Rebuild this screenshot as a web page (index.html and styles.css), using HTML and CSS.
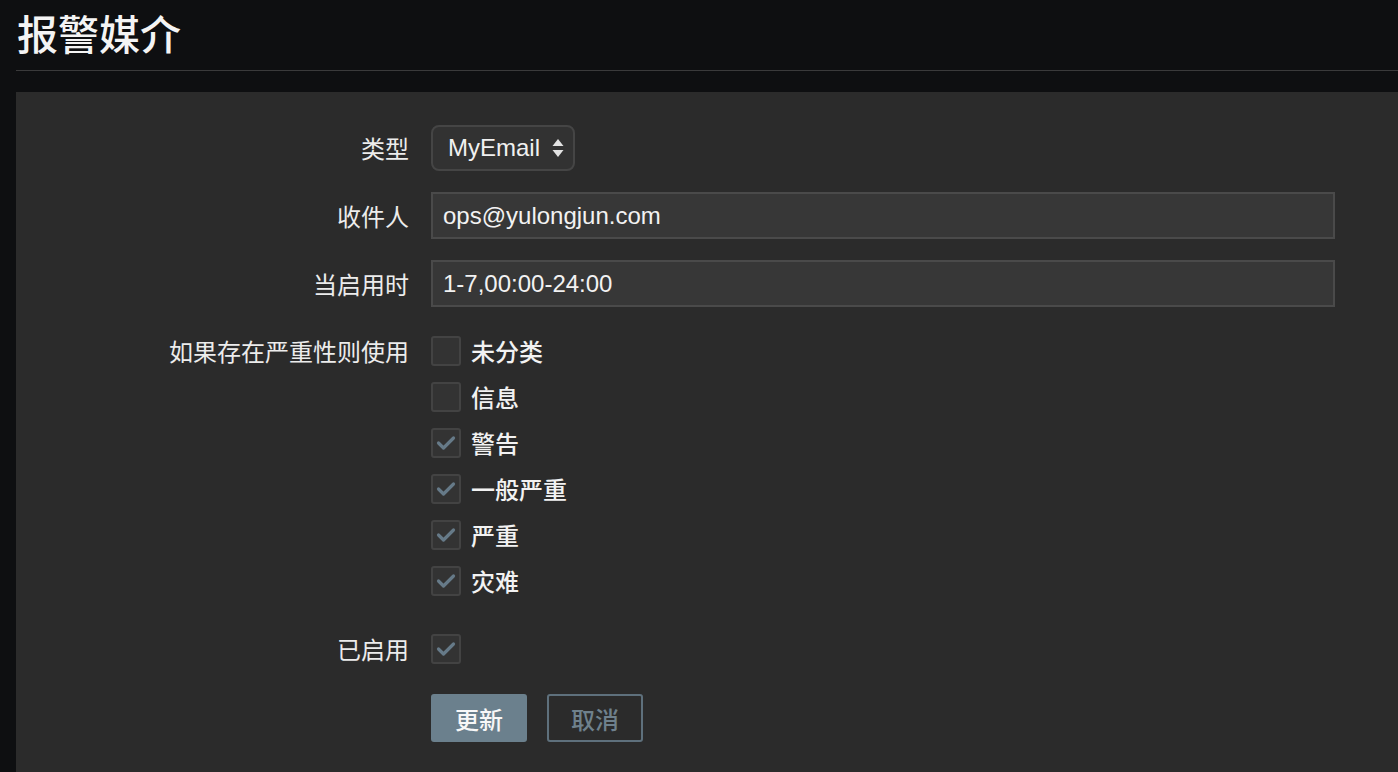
FILE: index.html
```html
<!DOCTYPE html>
<html lang="zh-CN">
<head>
<meta charset="utf-8">
<title>报警媒介</title>
<link rel="stylesheet" href="styles.css">
</head>
<body>
<div class="page">
  <header class="page-header">
    <h1 class="title">报警媒介</h1>
  </header>
  <section class="panel">
    <form class="form">
      <div class="row row-type">
        <label class="label">类型</label>
        <div class="control">
          <div class="select">
            <span class="select-text">MyEmail</span>
            <svg class="select-arrows" width="12" height="20" viewBox="0 0 12 20">
              <path d="M6 1 L11.5 8 L0.5 8 Z" fill="#e2e2e2"/>
              <path d="M6 19 L11.5 12 L0.5 12 Z" fill="#e2e2e2"/>
            </svg>
          </div>
        </div>
      </div>
      <div class="row row-input">
        <label class="label">收件人</label>
        <div class="control">
          <input class="text-input" type="text" value="ops@yulongjun.com">
        </div>
      </div>
      <div class="row row-input">
        <label class="label">当启用时</label>
        <div class="control">
          <input class="text-input" type="text" value="1-7,00:00-24:00">
        </div>
      </div>
      <div class="row row-severity">
        <label class="label">如果存在严重性则使用</label>
        <div class="control checklist">
          <div class="check-item"><span class="checkbox"></span><span class="check-label">未分类</span></div>
          <div class="check-item"><span class="checkbox"></span><span class="check-label">信息</span></div>
          <div class="check-item"><span class="checkbox checked"><svg width="30" height="30" viewBox="0 0 30 30"><path d="M7.5 15 L12.5 20 L22.5 10" fill="none" stroke="#667a88" stroke-width="3.2" stroke-linecap="round" stroke-linejoin="round"/></svg></span><span class="check-label">警告</span></div>
          <div class="check-item"><span class="checkbox checked"><svg width="30" height="30" viewBox="0 0 30 30"><path d="M7.5 15 L12.5 20 L22.5 10" fill="none" stroke="#667a88" stroke-width="3.2" stroke-linecap="round" stroke-linejoin="round"/></svg></span><span class="check-label">一般严重</span></div>
          <div class="check-item"><span class="checkbox checked"><svg width="30" height="30" viewBox="0 0 30 30"><path d="M7.5 15 L12.5 20 L22.5 10" fill="none" stroke="#667a88" stroke-width="3.2" stroke-linecap="round" stroke-linejoin="round"/></svg></span><span class="check-label">严重</span></div>
          <div class="check-item"><span class="checkbox checked"><svg width="30" height="30" viewBox="0 0 30 30"><path d="M7.5 15 L12.5 20 L22.5 10" fill="none" stroke="#667a88" stroke-width="3.2" stroke-linecap="round" stroke-linejoin="round"/></svg></span><span class="check-label">灾难</span></div>
        </div>
      </div>
      <div class="row row-enabled">
        <label class="label">已启用</label>
        <div class="control">
          <span class="checkbox checked"><svg width="30" height="30" viewBox="0 0 30 30"><path d="M7.5 15 L12.5 20 L22.5 10" fill="none" stroke="#667a88" stroke-width="3.2" stroke-linecap="round" stroke-linejoin="round"/></svg></span>
        </div>
      </div>
      <div class="row row-actions">
        <span class="label"></span>
        <div class="control actions">
          <button type="button" class="btn btn-primary">更新</button>
          <button type="button" class="btn btn-secondary">取消</button>
        </div>
      </div>
    </form>
  </section>
</div>
</body>
</html>
```

FILE: styles.css
```css
html, body {
  margin: 0;
  padding: 0;
  background: #0e0f11;
  overflow: hidden;
}

body {
  font-family: "Liberation Sans", "Noto Sans CJK SC", sans-serif;
  color: #ececec;
}

.page {
  padding-left: 16px;
}

.page-header {
  box-sizing: border-box;
  height: 71px;
  border-bottom: 1px solid #3a3a3b;
}

.title {
  margin: 0;
  padding-left: 1px;
  font-family: "Noto Sans CJK SC", sans-serif;
  font-size: 41px;
  font-weight: 500;
  line-height: 64px;
  color: #f4f4f4;
}

.panel {
  margin-top: 21px;
  background: #2b2b2b;
  padding: 33px 63px 40px 0;
  min-height: 700px;
  box-sizing: border-box;
}

.form {
  display: flex;
  flex-direction: column;
}

.row {
  display: grid;
  grid-template-columns: 393px 1fr;
  column-gap: 22px;
  align-items: center;
}

.row-input { margin-top: 21px; }
.row-severity { margin-top: 29px; align-items: start; }
.row-enabled { margin-top: 38px; }
.row-actions { margin-top: 30px; }

.label {
  text-align: right;
  font-family: "Noto Sans CJK SC", sans-serif;
  font-size: 24px;
  line-height: 30px;
  color: #ececec;
  white-space: nowrap;
}

.control {
  display: flex;
  align-items: center;
}

.select {
  display: flex;
  align-items: center;
  justify-content: space-between;
  width: 144px;
  height: 46px;
  box-sizing: border-box;
  border: 2px solid #454545;
  border-radius: 8px;
  background: #323232;
  padding-left: 15px;
  padding-right: 9px;
}

.select-text {
  font-size: 24px;
  color: #f0f0f0;
}

.text-input {
  width: 100%;
  height: 47px;
  box-sizing: border-box;
  border: 2px solid #4a4a4a;
  background: #373737;
  color: #f2f2f2;
  font-family: "Liberation Sans", "Noto Sans CJK SC", sans-serif;
  font-size: 24px;
  padding: 0 10px;
  outline: none;
  margin: 0;
}

.checklist {
  flex-direction: column;
  align-items: flex-start;
  gap: 16px;
}

.check-item {
  display: flex;
  align-items: center;
  gap: 10px;
  height: 30px;
}

.checkbox {
  display: block;
  width: 30px;
  height: 30px;
  box-sizing: border-box;
  border: 2px solid #434343;
  border-radius: 3px;
  background: #333333;
  position: relative;
  flex: none;
}

.checkbox svg {
  position: absolute;
  left: -2px;
  top: -2px;
}

.check-label {
  font-family: "Noto Sans CJK SC", sans-serif;
  font-size: 24px;
  font-weight: 500;
  color: #f2f2f2;
  line-height: 30px;
}

.actions {
  gap: 20px;
}

.btn {
  width: 96px;
  height: 48px;
  box-sizing: border-box;
  border-radius: 3px;
  font-family: "Noto Sans CJK SC", sans-serif;
  font-size: 24px;
  font-weight: 500;
  padding: 0;
  margin: 0;
  cursor: pointer;
}

.btn-primary {
  background: #6b808d;
  border: none;
  color: #f7f7f7;
}

.btn-secondary {
  background: transparent;
  border: 2px solid #5e707c;
  color: #6f818d;
}
```
